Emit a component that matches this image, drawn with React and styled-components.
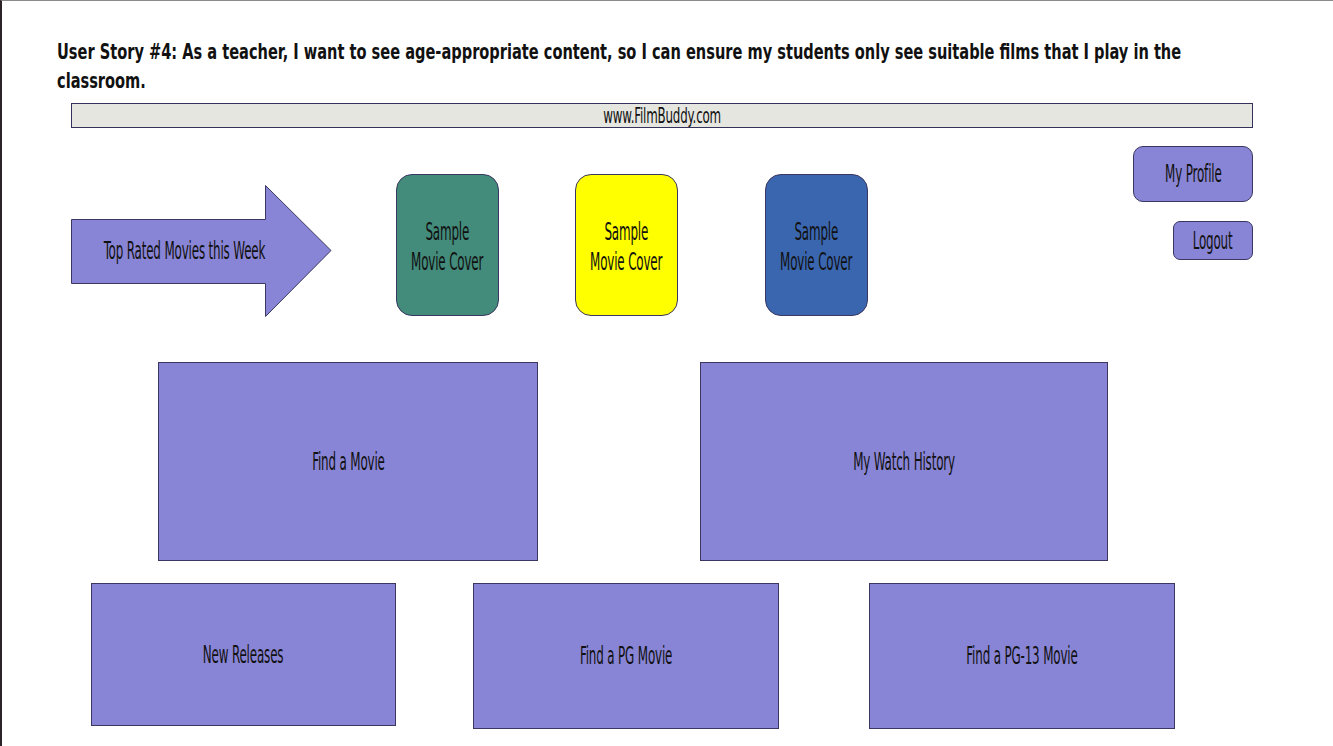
import React from 'react';
import styled, { createGlobalStyle } from 'styled-components';

const GlobalStyle = createGlobalStyle`
  body {
    margin: 0;
    background: #ffffff;
  }
`;

const Page = styled.div`
  width: 1331px;
  min-height: 745px;
  border-left: 2px solid #2b2327;
  border-top: 1px solid #8a8a8a;
  background: #fff;
  overflow: hidden;
`;

const Heading = styled.h1`
  margin: 36px 0 0 55px;
  width: 1600px;
  font-family: 'DejaVu Sans Condensed', 'DejaVu Sans', sans-serif;
  font-weight: bold;
  font-size: 22px;
  line-height: 29px;
  color: #111;
  white-space: nowrap;
  transform: scaleX(0.737);
  transform-origin: left top;
`;

const UrlBar = styled.div`
  margin: 8px 0 0 69px;
  width: 1180px;
  height: 23px;
  background: #e6e6e1;
  border: 1px solid #34325a;
  display: flex;
  align-items: center;
  justify-content: center;
`;

const Label = styled.span`
  display: inline-block;
  font-family: 'DejaVu Sans Condensed', 'DejaVu Sans', sans-serif;
  font-size: ${(p) => p.size || 25}px;
  line-height: 30px;
  color: #111;
  text-align: center;
  transform: scaleX(${(p) => p.scale || 0.53});
  letter-spacing: -0.3px;
  white-space: nowrap;
`;

const TopRow = styled.div`
  display: flex;
  align-items: flex-start;
  margin-top: 18px;
  height: 170px;
`;

const ArrowWrap = styled.div`
  position: relative;
  margin: 39px 0 0 69px;
  width: 261px;
  height: 132px;
  svg {
    display: block;
  }
`;

const ArrowText = styled.div`
  position: absolute;
  left: 0;
  top: 34px;
  width: 226px;
  height: 64px;
  display: flex;
  align-items: center;
  justify-content: center;
`;

const Cover = styled.div`
  box-sizing: border-box;
  margin: 28px 0 0 ${(p) => p.gap}px;
  width: 103px;
  height: 142px;
  padding-top: 4px;
  border: 1px solid #3a3760;
  border-radius: 16px;
  background: ${(p) => p.color};
  display: flex;
  align-items: center;
  justify-content: center;
  flex-direction: column;
`;

const Account = styled.div`
  margin-left: auto;
  margin-right: 80px;
  display: flex;
  flex-direction: column;
  align-items: flex-end;
  gap: 19px;
`;

const Pill = styled.div`
  width: ${(p) => p.w}px;
  height: ${(p) => p.h}px;
  background: #8985d6;
  border: 1px solid #3a3760;
  border-radius: ${(p) => p.r}px;
  display: flex;
  align-items: center;
  justify-content: center;
`;

const Row = styled.div`
  display: flex;
  align-items: flex-start;
  margin-top: ${(p) => p.top}px;
`;

const Tile = styled.div`
  margin-left: ${(p) => p.gap}px;
  width: ${(p) => p.w}px;
  height: ${(p) => p.h}px;
  background: #8985d6;
  border: 1px solid #3a3760;
  display: flex;
  align-items: center;
  justify-content: center;
`;

const covers = [
  { color: '#438b7b', gap: 64 },
  { color: '#ffff00', gap: 76 },
  { color: '#3a66b0', gap: 87 },
];

export default function App() {
  return (
    <>
      <GlobalStyle />
      <Page>
        <Heading>
          User Story #4: As a teacher, I want to see age-appropriate content, so I can ensure my students only see suitable films that I play in the
          <br />
          classroom.
        </Heading>
        <UrlBar>
          <Label size={22} scale={0.6}>www.FilmBuddy.com</Label>
        </UrlBar>

        <TopRow>
          <ArrowWrap>
            <svg width="261" height="132" viewBox="0 0 261 132">
              <polygon
                points="0.5,34.5 194.5,34.5 194.5,0.5 260,65.5 194.5,131.5 194.5,98.5 0.5,98.5"
                fill="#8985d6"
                stroke="#3a3760"
                strokeWidth="1"
              />
            </svg>
            <ArrowText>
              <Label>Top Rated Movies this Week</Label>
            </ArrowText>
          </ArrowWrap>
          {covers.map((c) => (
            <Cover key={c.color} color={c.color} gap={c.gap}>
              <Label>Sample</Label>
              <Label>Movie Cover</Label>
            </Cover>
          ))}
          <Account>
            <Pill w={118} h={54} r={10}>
              <Label>My Profile</Label>
            </Pill>
            <Pill w={78} h={37} r={7}>
              <Label>Logout</Label>
            </Pill>
          </Account>
        </TopRow>

        <Row top={46}>
          <Tile gap={156} w={378} h={197}>
            <Label>Find a Movie</Label>
          </Tile>
          <Tile gap={162} w={406} h={197}>
            <Label>My Watch History</Label>
          </Tile>
        </Row>

        <Row top={22}>
          <Tile gap={89} w={303} h={141}>
            <Label>New Releases</Label>
          </Tile>
          <Tile gap={77} w={304} h={144}>
            <Label>Find a PG Movie</Label>
          </Tile>
          <Tile gap={90} w={304} h={144}>
            <Label>Find a PG-13 Movie</Label>
          </Tile>
        </Row>
      </Page>
    </>
  );
}
